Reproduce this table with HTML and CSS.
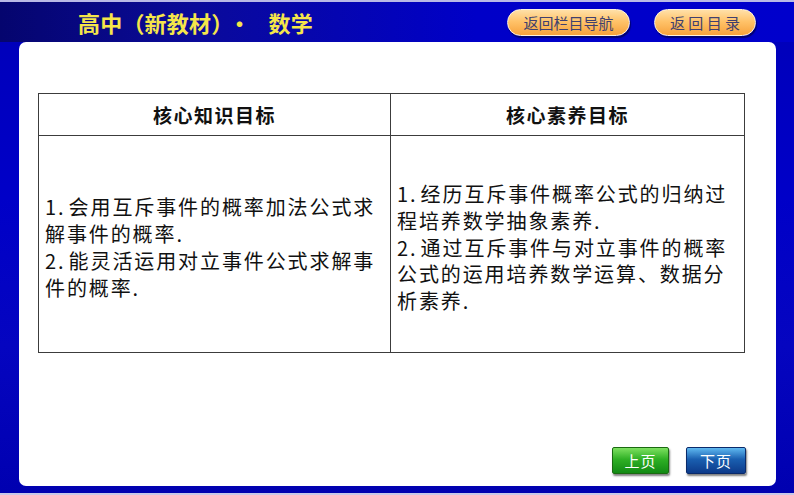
FILE: index.html
```html
<!DOCTYPE html>
<html lang="zh">
<head>
<meta charset="utf-8">
<link rel="stylesheet" href="styles.css">
</head>
<body>
<div class="frame">
  <header class="topbar">
    <h1 class="title">高中（新教材）<span class="dot">·</span>数学</h1>
    <div class="top-btns">
      <span class="pill pill-wide">返回栏目导航</span>
      <span class="pill pill-narrow">返 回 目 录</span>
    </div>
  </header>
  <main class="panel">
    <table class="goals">
      <thead>
        <tr>
          <th class="col-l">核心知识目标</th>
          <th class="col-r">核心素养目标</th>
        </tr>
      </thead>
      <tbody>
        <tr>
          <td class="cell-l">1.&#8202;会用互斥事件的概率加法公式求解事件的概率.<br>2.&#8202;能灵活运用对立事件公式求解事件的概率.</td>
          <td class="cell-r">1.&#8202;经历互斥事件概率公式的归纳过程培养数学抽象素养.<br>2.&#8202;通过互斥事件与对立事件的概率公式的运用培养数学运算、数据分析素养.</td>
        </tr>
      </tbody>
    </table>
    <nav class="pager">
      <span class="pg pg-prev">上页</span>
      <span class="pg pg-next">下页</span>
    </nav>
  </main>
</div>
</body>
</html>
```

FILE: styles.css
```css
html, body {
  margin: 0;
  padding: 0;
}
body {
  width: 794px;
  height: 495px;
  overflow: hidden;
  font-family: "Noto Sans CJK SC", "Noto Sans", sans-serif;
}
.frame {
  box-sizing: border-box;
  width: 794px;
  height: 495px;
  display: flex;
  flex-direction: column;
  border-top: 2px solid #b9b9e6;
  border-bottom: 2px solid #c8c8e8;
  background: linear-gradient(180deg, #0000b8 0, #0000c8 40%, #0505c0 70%, #0000b0 100%);
}
.topbar {
  height: 40px;
  display: flex;
  align-items: center;
  background: linear-gradient(90deg, #05056e 0%, #0a0a9a 25%, #0000c8 60%, #0000cc 100%);
}
.title {
  margin: 0 0 0 78px;
  font-size: 22px;
  font-weight: 700;
  color: #f5e64a;
  letter-spacing: 0.2px;
  line-height: 1;
  white-space: nowrap;
}
.dot {
  margin: 0 18px 0 6px;
}
.top-btns {
  margin-left: auto;
  margin-right: 38px;
  display: flex;
  gap: 24px;
  align-items: center;
}
.pill {
  box-sizing: border-box;
  height: 27px;
  border-radius: 14px;
  display: flex;
  align-items: center;
  justify-content: center;
  font-size: 15px;
  color: #40406e;
  background: linear-gradient(180deg, #ffe0a8 0%, #ffc36a 45%, #f7a23c 100%);
  border: 1.5px solid #fff3dc;
  box-shadow: 1px 2px 1px rgba(0,0,40,0.55);
  white-space: nowrap;
}
.pill-wide { width: 123px; }
.pill-narrow { width: 102px; }
.panel {
  flex: 1;
  margin: 0 18px 7px 19px;
  background: #fff;
  border-radius: 7px;
  display: flex;
  flex-direction: column;
  padding: 51px 0 12px 19px;
}
.goals {
  border-collapse: collapse;
  width: 707px;
  table-layout: fixed;
  color: #111;
}
.goals th, .goals td {
  border: 1.5px solid #3c3c3c;
}
.col-l { width: 351px; }
.goals th {
  height: 41px;
  padding: 0;
  font-size: 19px;
  font-weight: 700;
  text-align: center;
  letter-spacing: 1.5px;
}
.goals td {
  height: 208px;
  vertical-align: middle;
  font-size: 20px;
  line-height: 26.8px;
  letter-spacing: 1.9px;
  padding: 8px 6px 0 6px;
  text-align: left;
}
.pager {
  margin-top: auto;
  margin-right: 30px;
  display: flex;
  justify-content: flex-end;
  gap: 17px;
}
.pg {
  box-sizing: border-box;
  height: 27px;
  display: flex;
  align-items: center;
  justify-content: center;
  color: #fff;
  font-size: 15px;
  letter-spacing: 1px;
  border-radius: 2px;
  box-shadow: 1px 2px 2px rgba(0,0,0,0.5);
}
.pg-prev {
  width: 57px;
  background: linear-gradient(180deg, #7de060 0%, #2fb025 45%, #128a14 100%);
  border: 1px solid #1a6a10;
}
.pg-next {
  width: 60px;
  background: linear-gradient(180deg, #5fb8f0 0%, #1a5fb0 45%, #0d3a8a 100%);
  border: 1px solid #0a2a6a;
}
```
